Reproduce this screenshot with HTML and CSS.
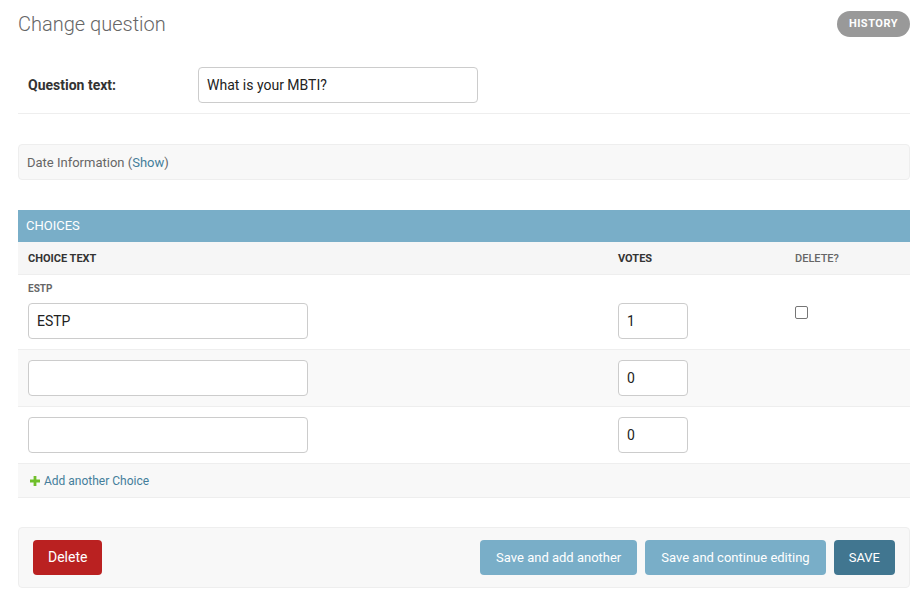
FILE: index.html
```html
<!DOCTYPE html>
<html>
<head>
<meta charset="utf-8">
<link rel="stylesheet" href="styles.css">
</head>
<body>
<div class="content">
  <div class="page-head">
    <h1>Change question</h1>
    <a class="history" href="#">History</a>
  </div>

  <div class="form-row">
    <label class="field-label">Question text:</label>
    <input class="vtext wide" type="text" value="What is your MBTI?">
  </div>

  <div class="collapsed">Date Information (<a href="#">Show</a>)</div>

  <div class="inline-group">
    <h2 class="inline-title">Choices</h2>
    <div class="grid head">
      <div class="th req">Choice text</div>
      <div class="th req">Votes</div>
      <div class="th">Delete?</div>
    </div>
    <div class="grid row first">
      <p class="original">ESTP</p>
      <div class="cell"><input class="vtext wide" type="text" value="ESTP"></div>
      <div class="cell"><input class="vtext small" type="text" value="1"></div>
      <div class="cell"><span class="checkbox"></span></div>
    </div>
    <div class="grid row alt">
      <div class="cell"><input class="vtext wide" type="text" value=""></div>
      <div class="cell"><input class="vtext small" type="text" value="0"></div>
      <div class="cell"></div>
    </div>
    <div class="grid row">
      <div class="cell"><input class="vtext wide" type="text" value=""></div>
      <div class="cell"><input class="vtext small" type="text" value="0"></div>
      <div class="cell"></div>
    </div>
    <div class="add-row">
      <svg class="plus" width="10" height="10" viewBox="0 0 10 10"><path d="M3.6 0h2.8v3.6H10v2.8H6.4V10H3.6V6.4H0V3.6h3.6z" fill="#70bf2b"/></svg>
      <a href="#">Add another Choice</a>
    </div>
  </div>

  <div class="submit-row">
    <a class="btn delete" href="#">Delete</a>
    <div class="spacer"></div>
    <a class="btn save-other" href="#">Save and add another</a>
    <a class="btn save-other" href="#">Save and continue editing</a>
    <a class="btn save" href="#">SAVE</a>
  </div>
</div>
</body>
</html>
```

FILE: styles.css
```css
* { box-sizing: border-box; }
body {
  margin: 0;
  font-family: Roboto, "Liberation Sans", sans-serif;
  color: #333;
  background: #fff;
}
a { text-decoration: none; color: #447e9b; }
.content {
  padding: 11px 11px 0 18px;
}
.page-head {
  display: flex;
  justify-content: space-between;
  align-items: flex-start;
  height: 46px;
}
h1 {
  margin: 0;
  font-weight: 300;
  font-size: 20px;
  line-height: 26px;
  color: #666;
}
.history {
  display: block;
  height: 26px;
  line-height: 26px;
  padding: 0 12px;
  border-radius: 15px;
  background: #999;
  color: #fff;
  font-size: 11px;
  font-weight: 700;
  letter-spacing: 0.5px;
  text-transform: uppercase;
}
.form-row {
  display: flex;
  align-items: center;
  padding: 10px;
  border-bottom: 1px solid #eee;
}
.field-label {
  width: 170px;
  font-size: 14px;
  font-weight: 700;
  color: #333;
}
.vtext {
  height: 36px;
  border: 1px solid #ccc;
  border-radius: 4px;
  padding: 0 8px;
  font-family: Roboto, "Liberation Sans", sans-serif;
  font-size: 14px;
  color: #222;
  background: #fff;
  margin: 0;
  outline: none;
}
.vtext.wide { width: 280px; }
.vtext.small { width: 70px; }
.collapsed {
  margin-top: 30px;
  height: 36px;
  line-height: 35px;
  padding: 0 8px;
  background: #f8f8f8;
  border: 1px solid #eee;
  border-radius: 4px;
  font-size: 13px;
  color: #666;
}
.inline-group {
  margin-top: 30px;
}
.inline-title {
  margin: 0;
  height: 32px;
  line-height: 32px;
  padding: 0 8px;
  background: #79aec8;
  color: #fff;
  font-size: 13px;
  font-weight: 400;
  text-transform: uppercase;
}
.grid {
  display: grid;
  grid-template-columns: 590px 177px 1fr;
}
.head {
  background: #f6f6f6;
  border-bottom: 1px solid #eee;
  height: 33px;
  align-items: center;
}
.th {
  padding: 0 10px;
  font-size: 11px;
  font-weight: 500;
  color: #666;
  text-transform: uppercase;
}
.th.req { font-weight: 700; color: #333; }
.row {
  border-bottom: 1px solid #eee;
  padding: 10px 0;
  align-items: start;
}
.row.first { padding-top: 8px; }
.row.alt { background: #f9f9f9; }
.original {
  grid-column: 1 / -1;
  margin: 0 0 8px;
  padding: 0 10px;
  font-size: 10px;
  font-weight: 700;
  line-height: 12px;
  color: #666;
}
.cell {
  padding: 0 10px;
}
.checkbox {
  display: block;
  width: 13px;
  height: 13px;
  margin-top: 3px;
  border: 1px solid #767676;
  border-radius: 2px;
  background: #fff;
}
.add-row {
  display: flex;
  align-items: center;
  height: 34px;
  padding: 0 12px;
  background: #f8f8f8;
  border-bottom: 1px solid #eee;
  font-size: 12px;
}
.plus { margin-right: 4px; }
.submit-row {
  margin-top: 29px;
  display: flex;
  gap: 8px;
  padding: 12px 14px;
  background: #f8f8f8;
  border: 1px solid #eee;
  border-radius: 4px;
}
.spacer { flex: 1; }
.btn {
  display: block;
  height: 35px;
  line-height: 35px;
  padding: 0 16px;
  border-radius: 4px;
  color: #fff;
  font-size: 13px;
}
.delete { background: #ba2121; font-size: 14px; padding: 0 15px; }
.save-other { background: #79aec8; }
.save { background: #417690; padding: 0 15px; }
```
